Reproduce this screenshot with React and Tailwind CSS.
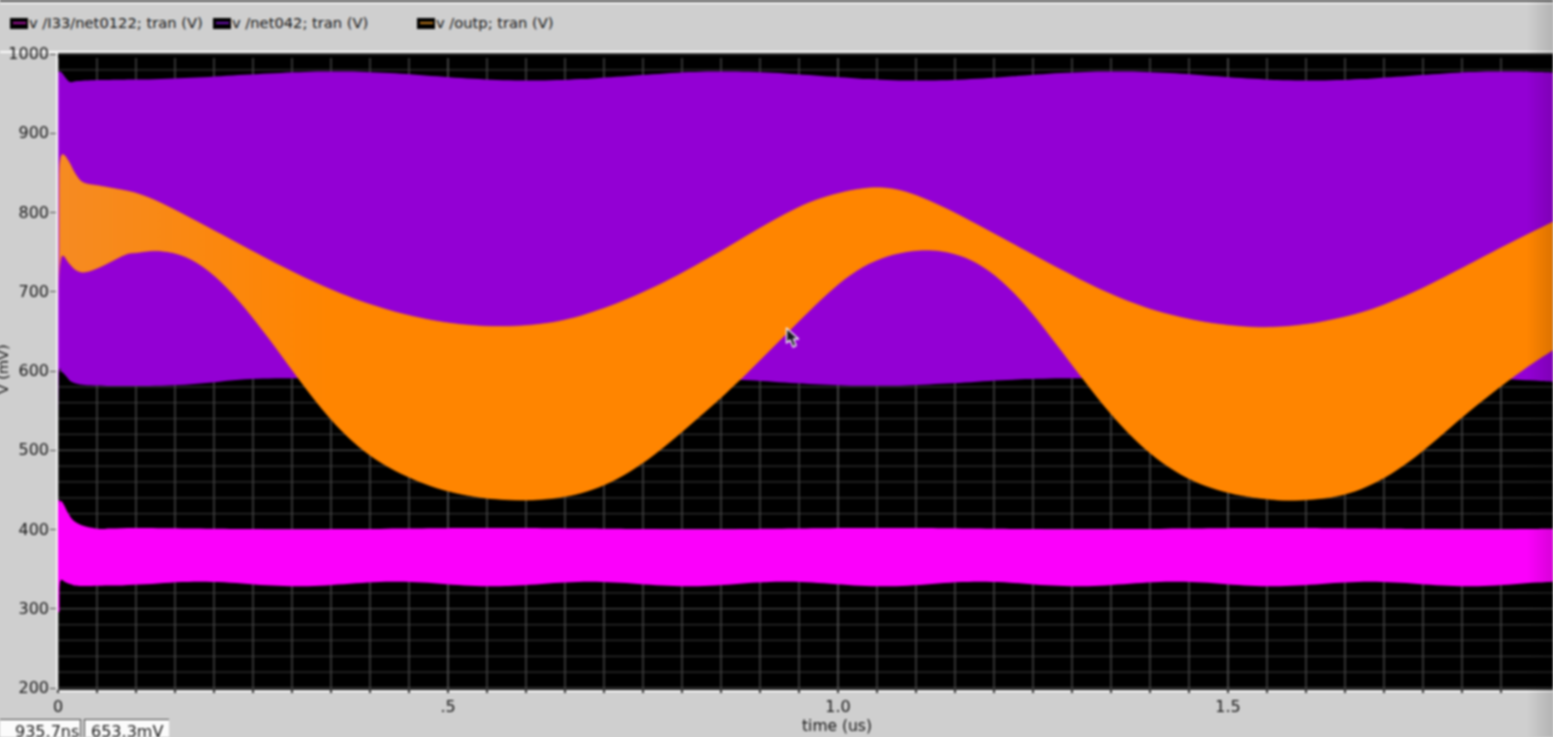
const smooth = (pts) => {
  let d = `M${pts[0][0]} ${pts[0][1]}`;
  for (let i = 0; i < pts.length - 1; i++) {
    const p0 = pts[Math.max(0, i - 1)];
    const p1 = pts[i];
    const p2 = pts[i + 1];
    const p3 = pts[Math.min(pts.length - 1, i + 2)];
    const c1x = p1[0] + (p2[0] - p0[0]) / 6;
    const c1y = p1[1] + (p2[1] - p0[1]) / 6;
    const c2x = p2[0] - (p3[0] - p1[0]) / 6;
    const c2y = p2[1] - (p3[1] - p1[1]) / 6;
    d += `C${c1x.toFixed(1)} ${c1y.toFixed(1)} ${c2x.toFixed(1)} ${c2y.toFixed(1)} ${p2[0]} ${p2[1]}`;
  }
  return d;
};

const lerpAt = (pts, x) => {
  if (x <= pts[0][0]) return pts[0][1];
  const n = pts.length;
  if (x >= pts[n - 1][0]) {
    const [ax, ay] = pts[n - 2];
    const [bx, by] = pts[n - 1];
    return by + ((by - ay) / (bx - ax)) * (x - bx);
  }
  for (let i = 0; i < n - 1; i++) {
    if (x <= pts[i + 1][0]) {
      const [ax, ay] = pts[i];
      const [bx, by] = pts[i + 1];
      return ay + ((by - ay) * (x - ax)) / (bx - ax);
    }
  }
  return pts[n - 1][1];
};

// Keep the start-up transient as drawn, and average the long swing so it has no kinks.
const soften = (pts, keepUntil = 125, reach = 30) => {
  const head = pts.filter((p) => p[0] < keepUntil);
  const tail = [];
  for (let x = keepUntil; x <= 1553; x += 12) {
    let sum = 0;
    let count = 0;
    for (let o = -reach; o <= reach; o += 5) {
      const weight = 1 - Math.abs(o) / (reach + 5);
      sum += lerpAt(pts, Math.max(keepUntil - 5, x + o)) * weight;
      count += weight;
    }
    tail.push([x, +(sum / count).toFixed(1)]);
  }
  if (tail[tail.length - 1][0] < 1553) {
    tail.push([1553, +lerpAt(pts, 1553).toFixed(1)]);
  }
  return [...head, ...tail];
};

const band = (top, bottom) => {
  const reversed = [...bottom].reverse();
  const backward = smooth(reversed).replace(/^M/, 'L');
  return `${smooth(top)}${backward}Z`;
};

const wave = (from, to, step, fn) => {
  const out = [];
  for (let x = from; x <= to; x += step) out.push([x, +fn(x).toFixed(1)]);
  if (out[out.length - 1][0] !== to) out.push([to, +fn(to).toFixed(1)]);
  return out;
};

const TAU = Math.PI * 2;

const purpleTop = soften([
  [58, 100], [59, 74], [61, 72], [65, 77], [70, 82], [78, 81], [100, 80], [150, 79.5], [200, 77.5], [250, 74.5],
  ...wave(300, 1553, 30, (x) => 76 - 4.8 * Math.cos((TAU * (x - 335)) / 390)),
]);
const purpleBottom = soften([
  [58, 420], [59, 372], [62, 372], [66, 376], [72, 382], [85, 385], [110, 386], [160, 386], [200, 384],
  ...wave(240, 1553, 30, (x) => 382 + 4 * Math.cos((TAU * (x - 485)) / 390)),
]);
const orangeTop = soften([
  [58, 215], [59, 175], [61, 157], [64, 155], [69, 162], [76, 175], [84, 183], [100, 186], [125, 189], [150, 197], [200, 223],
  [250, 250], [300, 276], [350, 298], [400, 314], [450, 324], [490, 327], [530, 326], [570, 320], [620, 303], [670, 280], [720, 252],
  [770, 222], [810, 201], [850, 190], [878, 186], [905, 190], [950, 210], [1000, 237], [1050, 264], [1100, 290], [1150, 310], [1200, 322],
  [1240, 327], [1275, 328], [1320, 323], [1370, 311], [1420, 290], [1470, 264], [1510, 243], [1553, 222],
]);
const orangeBottom = soften([
  [58, 300], [59, 275], [61, 258], [64, 256], [69, 263], [76, 270], [85, 272], [100, 267], [125, 255], [150, 249], [175, 251], [200, 262],
  [225, 284], [250, 313], [280, 353], [310, 395], [340, 431], [370, 457], [400, 474], [440, 490], [480, 498], [525, 501], [570, 497], [610, 484],
  [650, 459], [690, 425], [730, 390], [760, 360], [790, 330], [820, 300], [850, 273], [880, 257], [910, 250], [935, 249], [965, 255], [995, 273],
  [1025, 303], [1055, 342], [1085, 382], [1115, 420], [1150, 455], [1190, 481], [1230, 494], [1270, 500], [1300, 501], [1345, 496], [1385, 479],
  [1425, 450], [1465, 414], [1505, 383], [1530, 364], [1553, 350],
]);
const magentaTop = soften([
  [58, 530], [59, 505], [61, 501], [64, 505], [68, 513], [74, 521], [84, 526], [100, 529],
  ...wave(130, 1553, 60, (x) => 528.6 + 0.7 * Math.cos((TAU * (x - 300)) / 390)),
], 110, 10);
const magentaBottom = soften([
  [58, 615], [59, 590], [61, 580], [65, 582], [70, 584], [80, 586], [120, 585.5],
  ...wave(150, 1553, 16.25, (x) => 584 + 2.4 * Math.cos((TAU * (x - 298)) / 195)),
], 110, 10);

const hLines = Array.from({ length: 41 }, (_, i) => 54 + i * 15.85);
const vLines = Array.from({ length: 38 }, (_, i) => 58 + i * 39);
const yLabels = ['1000', '900', '800', '700', '600', '500', '400', '300', '200'];
const xLabels = ['0', '.5', '1.0', '1.5'];
const legend = [
  { name: 'v /I33/net0122; tran (V)', line: 'bg-[#a0109a]', width: 'w-[203px]' },
  { name: 'v /net042; tran (V)', line: 'bg-[#6a10b0]', width: 'w-[204px]' },
  { name: 'v /outp; tran (V)', line: 'bg-[#b8751a]', width: 'w-[140px]' },
];

export default function App() {
  return (
    <div className="w-[1553px] h-[737px] overflow-hidden bg-[#cfcfcf]">
      <div className="relative w-[1553px] h-[737px] flex flex-col bg-[#cfcfcf] text-[#161616] text-[14.7px] leading-none blur-[0.8px] font-['DejaVu_Sans',sans-serif]">
        <div className="h-[2px] bg-[#4c4c4c]" />
        <div className="h-[2px] bg-[#f4f4f4]" />
        <div className="h-[47px] flex items-start pl-[10px] pt-[12px]">
          {legend.map((item) => (
            <div key={item.name} className={`flex items-center ${item.width}`}>
              <span className="w-[18px] h-[11px] mr-[1px] bg-black flex items-center justify-center">
                <span className={`w-[13px] h-[2px] ${item.line}`} />
              </span>
              <span className="whitespace-nowrap">{item.name}</span>
            </div>
          ))}
        </div>
        <div className="h-[2px] bg-[#fafafa]" />

        <div className="flex h-[637px]">
          <div className="relative w-[56px] h-full text-[16px]">
            <div className="h-[634px] mt-[1px] flex flex-col justify-between">
              {yLabels.map((label) => (
                <div key={label} className="h-0 flex items-center justify-end">
                  <span>{label}</span>
                  <span className="w-[6px] h-px ml-px bg-[#555]" />
                </div>
              ))}
            </div>
            <span className="absolute left-[-22px] top-[309px] w-[50px] text-center -rotate-90 whitespace-nowrap text-[14.5px]">
              V (mV)
            </span>
          </div>
          <div className="w-[2px] h-full bg-[#f6f6f6]" />
          <svg width="1495" height="637" viewBox="58 53 1495 637" className="block shrink-0 bg-black">
            <defs>
              <linearGradient id="orangeTint" x1="58" x2="330" y1="0" y2="0" gradientUnits="userSpaceOnUse">
                <stop offset="0" stopColor="#f68b22" />
                <stop offset="1" stopColor="#ff8500" />
              </linearGradient>
            </defs>
            {hLines.map((y, i) => (
              <line key={y} x1="58" x2="1553" y1={y} y2={y} stroke={i % 5 === 0 ? '#5c5c5c' : '#313131'} strokeWidth="1.2" />
            ))}
            {vLines.map((x, i) => (
              <line key={x} x1={x} x2={x} y1="58" y2="690" stroke={i % 10 === 0 ? '#5c5c5c' : '#484848'} strokeWidth="1.4" />
            ))}
            <path d={band(purpleTop, purpleBottom)} fill="#9300d4" />
            <path d={band(orangeTop, orangeBottom)} fill="url(#orangeTint)" stroke="#ff8500" strokeWidth="0.6" />
            <path d={band(magentaTop, magentaBottom)} fill="#fb00fb" />
            <line x1="58.7" x2="58.7" y1="500" y2="612" stroke="#fb00fb" strokeWidth="1.4" />
            <line x1="58.7" x2="58.7" y1="72" y2="370" stroke="#b030e0" strokeWidth="1.2" />
          </svg>
        </div>

        <div className="h-[2px] bg-[#fafafa] ml-[57px] flex">
          {vLines.map((x) => (
            <span key={x} className="w-[39px] shrink-0">
              <span className="block w-[2px] h-[3px] bg-[#333]" />
            </span>
          ))}
        </div>

        <div className="h-[45px] flex flex-col">
          <div className="h-[27px] flex pl-[58px] pt-[15px] gap-[390px] text-[16px]">
            {xLabels.map((label) => (
              <div key={label} className="w-0 h-0 flex items-center justify-center">
                <span>{label}</span>
              </div>
            ))}
          </div>
          <div className="flex items-start h-[18px] text-[16px]">
            <div className="w-[81px] h-[18px] pl-[15px] pt-[4px] bg-[#fbfbfb] border-t border-r border-[#444] whitespace-nowrap">935.7ns</div>
            <div className="ml-[3px] w-[85px] h-[18px] pl-[6px] pt-[4px] bg-[#fbfbfb] border-t border-l border-[#444] whitespace-nowrap">653.3mV</div>
            <div className="ml-[633px] w-[72px] whitespace-nowrap text-[15.5px]">time (us)</div>
          </div>
        </div>

        <svg width="16" height="22" viewBox="0 0 16 22" className="absolute left-[785px] top-[327px]">
          <path d="M1.5 1 L1.5 16 L5 13 L8 20 L11 18.5 L8.5 12 L13.5 12 Z" fill="#15151f" stroke="#f0e8f5" strokeWidth="1.4" strokeLinejoin="round" />
        </svg>
        <div className="absolute right-0 top-0 w-[26px] h-full pointer-events-none bg-gradient-to-r from-transparent to-[#00000022]" />
      </div>
    </div>
  );
}
